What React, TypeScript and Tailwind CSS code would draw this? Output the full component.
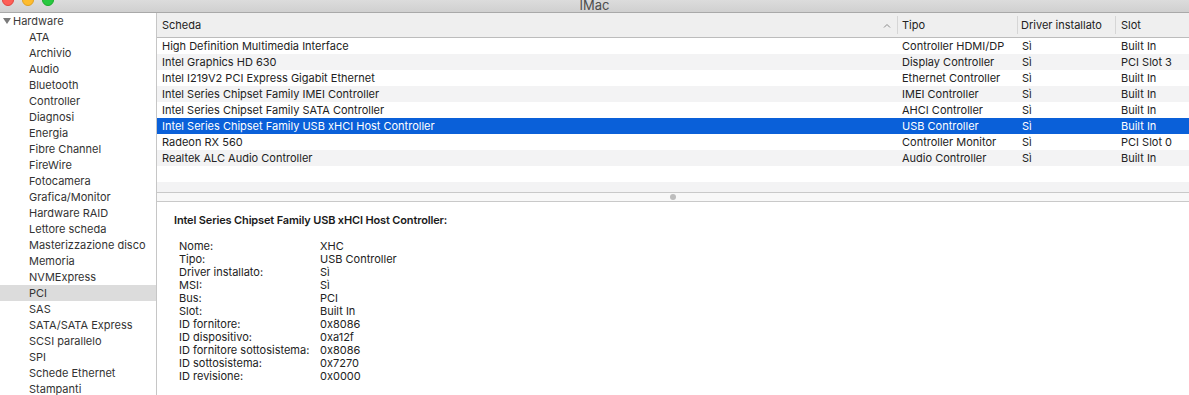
const sidebarItems = [
  "ATA",
  "Archivio",
  "Audio",
  "Bluetooth",
  "Controller",
  "Diagnosi",
  "Energia",
  "Fibre Channel",
  "FireWire",
  "Fotocamera",
  "Grafica/Monitor",
  "Hardware RAID",
  "Lettore scheda",
  "Masterizzazione disco",
  "Memoria",
  "NVMExpress",
  "PCI",
  "SAS",
  "SATA/SATA Express",
  "SCSI parallelo",
  "SPI",
  "Schede Ethernet",
  "Stampanti",
];

const cards = [
  { name: "High Definition Multimedia Interface", type: "Controller HDMI/DP", driver: "Sì", slot: "Built In" },
  { name: "Intel Graphics HD 630", type: "Display Controller", driver: "Sì", slot: "PCI Slot 3" },
  { name: "Intel I219V2 PCI Express Gigabit Ethernet", type: "Ethernet Controller", driver: "Sì", slot: "Built In" },
  { name: "Intel Series Chipset Family IMEI Controller", type: "IMEI Controller", driver: "Sì", slot: "Built In" },
  { name: "Intel Series Chipset Family SATA Controller", type: "AHCI Controller", driver: "Sì", slot: "Built In" },
  { name: "Intel Series Chipset Family USB xHCI Host Controller", type: "USB Controller", driver: "Sì", slot: "Built In" },
  { name: "Radeon RX 560", type: "Controller Monitor", driver: "Sì", slot: "PCI Slot 0" },
  { name: "Realtek ALC Audio Controller", type: "Audio Controller", driver: "Sì", slot: "Built In" },
];

const details = [
  ["Nome:", "XHC"],
  ["Tipo:", "USB Controller"],
  ["Driver installato:", "Sì"],
  ["MSI:", "Sì"],
  ["Bus:", "PCI"],
  ["Slot:", "Built In"],
  ["ID fornitore:", "0x8086"],
  ["ID dispositivo:", "0xa12f"],
  ["ID fornitore sottosistema:", "0x8086"],
  ["ID sottosistema:", "0x7270"],
  ["ID revisione:", "0x0000"],
];

const selectedIndex = 5;
const cols = "grid grid-cols-[740px_120px_98px_1fr]";

export default function App() {
  return (
    <div
      className="flex h-[395px] w-[1189px] flex-col overflow-hidden bg-white text-[11px] text-[#222]"
      style={{ fontFamily: 'Inter, "Liberation Sans", Arial, sans-serif' }}
    >
      {/* title bar, cut off at the top */}
      <div className="relative flex h-[13px] shrink-0 items-end justify-center border-b border-[#a9a9a9] bg-gradient-to-b from-[#dcdcdc] to-[#d0d0d0]">
        <div className="absolute left-[2px] top-[-6px] flex gap-[8px]">
          <span className="h-[12px] w-[12px] rounded-full border border-[#e0443e] bg-[#fe5f57]" />
          <span className="h-[12px] w-[12px] rounded-full border border-[#dea123] bg-[#febc2e]" />
          <span className="h-[12px] w-[12px] rounded-full border border-[#1aab29] bg-[#28c840]" />
        </div>
        <span className="text-[13px] leading-[14px] text-[#4d4d4d]">IMac</span>
      </div>

      <div className="flex min-h-0 flex-1">
        {/* sidebar */}
        <div className="w-[157px] shrink-0 border-r border-[#c6c6c6] bg-white">
          <div className="flex h-[16px] items-center pl-[3px] text-[#3a3a3a]">
            <svg width="8" height="8" viewBox="0 0 8 8" className="mr-[2px]">
              <path d="M0 1 L8 1 L4 7 Z" fill="#7a7a7a" />
            </svg>
            <span>Hardware</span>
          </div>
          {sidebarItems.map((item) => (
            <div
              key={item}
              className={`flex h-[16px] items-center pl-[29px] text-[#333] ${item === "PCI" ? "bg-[#dcdcdc]" : ""}`}
            >
              {item}
            </div>
          ))}
        </div>

        {/* main */}
        <div className="flex min-w-0 flex-1 flex-col">
          <div className="h-[179px] shrink-0 overflow-hidden">
            <div className={`${cols} h-[25px] border-b border-[#bcbcbc] bg-[#efefef] text-[#222]`}>
              <div className="flex items-center justify-between pl-[5px] pr-[6px]">
                <span>Scheda</span>
                <svg width="8" height="5" viewBox="0 0 8 5">
                  <path d="M1 4.5 L4 1.5 L7 4.5" stroke="#8a8a8a" strokeWidth="1" fill="none" />
                </svg>
              </div>
              {["Tipo", "Driver installato", "Slot"].map((h) => (
                <div key={h} className="flex items-center">
                  <span className="h-[18px] w-px bg-[#d6d6d6]" />
                  <span className={h === "Driver installato" ? "pl-[3px]" : h === "Slot" ? "pl-[5px]" : "pl-[4px]"}>{h}</span>
                </div>
              ))}
            </div>
            {[...cards, null, null].map((row, i) => {
              const selected = i === selectedIndex;
              const bg = selected ? "bg-[#0a60d9] text-white" : i % 2 === 1 ? "bg-[#f3f3f4]" : "bg-white";
              return (
                <div key={i} className={`${cols} h-[16px] items-center ${bg}`}>
                  <span className="truncate pl-[5px]">{row?.name}</span>
                  <span className="pl-[5px]">{row?.type}</span>
                  <span className="pl-[5px]">{row?.driver}</span>
                  <span className="pl-[6px]">{row?.slot}</span>
                </div>
              );
            })}
          </div>

          {/* splitter */}
          <div className="flex h-[10px] shrink-0 items-center justify-center border-y border-[#c9c9c9] bg-[#f8f8f8]">
            <span className="h-[6px] w-[6px] rounded-full bg-[#bdbdbd]" />
          </div>

          {/* detail */}
          <div className="flex-1 bg-white pl-[17px] pt-[11px]">
            <div className="font-semibold leading-[14px] tracking-[-0.15px] text-[#1a1a1a]">
              Intel Series Chipset Family USB xHCI Host Controller:
            </div>
            <div className="mt-[13px] grid grid-cols-[141px_1fr] pl-[5px] leading-[13px] text-[#222]">
              {details.map(([k, v]) => (
                <div key={k} className="contents">
                  <span>{k}</span>
                  <span>{v}</span>
                </div>
              ))}
            </div>
          </div>
        </div>
      </div>
    </div>
  );
}
